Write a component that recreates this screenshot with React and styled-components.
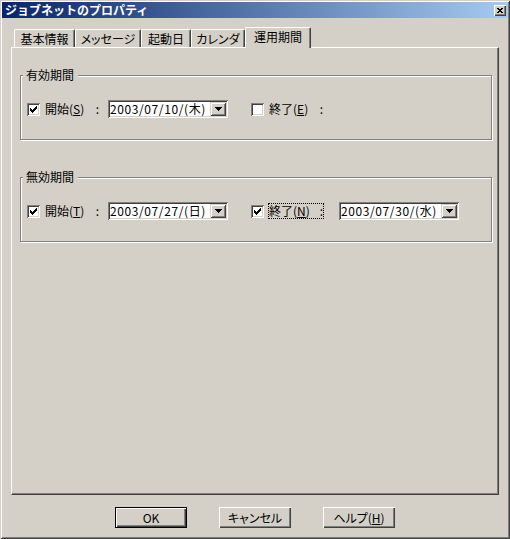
import React from "react";
import styled, { createGlobalStyle } from "styled-components";

const TABS = [
  { label: "基本情報", width: 61 },
  { label: "メッセージ", width: 66 },
  { label: "起動日", width: 50 },
  { label: "カレンダ", width: 54 },
  { label: "運用期間", width: 66, active: true },
];

const GROUPS = [
  {
    title: "有効期間",
    gap: 27,
    start: { checked: true, label: "開始", key: "S", date: "2003/07/10/(木)" },
    end: { checked: false, label: "終了", key: "E" },
  },
  {
    title: "無効期間",
    gap: 37,
    start: { checked: true, label: "開始", key: "T", date: "2003/07/27/(日)" },
    end: { checked: true, label: "終了", key: "N", focused: true, date: "2003/07/30/(水)" },
  },
];

const CHECK_MARK = [
  "......#",
  ".....##",
  "#...###",
  "##.###.",
  "#####..",
  ".###...",
  "..#....",
];

const ARROW_DOWN = ["#######", ".#####.", "..###..", "...#..."];

const CLOSE_X = ["##..##", ".####.", "..##..", ".####.", "##..##"];

function PixelIcon({ rows, color = "#000" }) {
  const d = rows
    .flatMap((row, y) =>
      [...row].map((c, x) => (c === "#" ? `M${x} ${y}h1v1h-1z` : ""))
    )
    .join("");
  const w = rows[0].length;
  const h = rows.length;
  return (
    <svg width={w} height={h} viewBox={`0 0 ${w} ${h}`} shapeRendering="crispEdges">
      <path d={d} fill={color} />
    </svg>
  );
}

function Checkbox({ checked, offset = 0 }) {
  return <Check $offset={offset}>{checked && <PixelIcon rows={CHECK_MARK} />}</Check>;
}

function DatePicker({ value, offset }) {
  return (
    <Combo $offset={offset}>
      <ComboText>{value}</ComboText>
      <DropButton>
        <PixelIcon rows={ARROW_DOWN} />
      </DropButton>
    </Combo>
  );
}

function Field({ item, checkOffset, comboOffset }) {
  return (
    <>
      <Checkbox checked={item.checked} offset={checkOffset} />
      <Label $focused={item.focused}>
        <span>
          {item.label}(<u>{item.key}</u>)
        </span>
        <span>:</span>
      </Label>
      {item.date && <DatePicker value={item.date} offset={comboOffset} />}
    </>
  );
}

export default function App() {
  return (
    <>
      <GlobalStyle />
      <Window>
        <TitleBar>
          <Title>ジョブネットのプロパティ</Title>
          <CloseButton>
            <PixelIcon rows={CLOSE_X} />
          </CloseButton>
        </TitleBar>
        <Body>
          <TabStrip>
            {TABS.map((tab) => (
              <Tab key={tab.label} $width={tab.width} $active={tab.active}>
                {tab.label}
              </Tab>
            ))}
          </TabStrip>
          <Panel>
            {GROUPS.map((group) => (
              <Group key={group.title} $gap={group.gap}>
                <Legend>{group.title}</Legend>
                <Row>
                  <Field item={group.start} checkOffset={0} comboOffset={8} />
                  <Field item={group.end} checkOffset={23} comboOffset={15} />
                </Row>
              </Group>
            ))}
          </Panel>
          <Footer>
            <Button $default>OK</Button>
            <Button>キャンセル</Button>
            <Button>
              ヘルプ(<u>H</u>)
            </Button>
          </Footer>
        </Body>
      </Window>
    </>
  );
}

// Styled Components
const GlobalStyle = createGlobalStyle`
  html, body {
    margin: 0;
    padding: 0;
    background: #d4d0c8;
  }
  body {
    font-family: "Noto Sans CJK JP", "Noto Sans", sans-serif;
    font-size: 12px;
    color: #000;
  }
  u {
    text-underline-offset: 1px;
  }
`;

const raised = `
  box-shadow: inset 1px 1px 0 #d4d0c8, inset -1px -1px 0 #404040,
    inset 2px 2px 0 #fff, inset -2px -2px 0 #808080;
`;

const sunken = `
  box-shadow: inset 1px 1px 0 #808080, inset -1px -1px 0 #fff,
    inset 2px 2px 0 #404040, inset -2px -2px 0 #d4d0c8;
`;

const bevel = `
  box-shadow: inset 1px 1px 0 #fff, inset -1px -1px 0 #404040,
    inset -2px -2px 0 #808080;
`;

const Window = styled.div`
  box-sizing: border-box;
  width: 510px;
  height: 539px;
  padding: 2px;
  display: flex;
  flex-direction: column;
  background: #d4d0c8;
  ${raised}
`;

const TitleBar = styled.div`
  height: 16px;
  flex: none;
  display: flex;
  align-items: center;
  justify-content: space-between;
  padding: 0 2px 0 3px;
  background: linear-gradient(to right, #0a246a, #a6caf0);
`;

const Title = styled.span`
  color: #fff;
  font-weight: bold;
  line-height: 16px;
  white-space: nowrap;
`;

const CloseButton = styled.span`
  box-sizing: border-box;
  width: 12px;
  height: 11px;
  display: flex;
  align-items: center;
  justify-content: center;
  background: #d4d0c8;
  ${bevel}
`;

const Body = styled.div`
  flex: 1;
  display: flex;
  flex-direction: column;
  padding: 9px 9px 0;
`;

const TabStrip = styled.div`
  height: 20px;
  flex: none;
  display: flex;
  align-items: flex-end;
  padding-left: 3px;
`;

const Tab = styled.div`
  box-sizing: border-box;
  width: ${(p) => p.$width}px;
  height: ${(p) => (p.$active ? 21 : 18)}px;
  margin-bottom: ${(p) => (p.$active ? -1 : 0)}px;
  padding-bottom: ${(p) => (p.$active ? 2 : 0)}px;
  position: relative;
  z-index: ${(p) => (p.$active ? 1 : 0)};
  display: flex;
  align-items: center;
  justify-content: center;
  background: #d4d0c8;
  border-top: 1px solid #fff;
  border-left: 1px solid #fff;
  border-right: 1px solid #404040;
  border-radius: 2px 2px 0 0;
  box-shadow: inset -1px 0 0 #808080;
  line-height: 14px;
  white-space: nowrap;
  font-feature-settings: "palt";
`;

const Panel = styled.div`
  flex: 1;
  box-sizing: border-box;
  display: flex;
  flex-direction: column;
  padding: 0 6px 0 8px;
  border-top: 1px solid #fff;
  border-left: 1px solid #fff;
  border-right: 1px solid #404040;
  border-bottom: 1px solid #404040;
  box-shadow: inset -1px -1px 0 #808080;
`;

const Group = styled.section`
  box-sizing: border-box;
  margin-top: ${(p) => p.$gap}px;
  padding: 0 6px 21px;
  border: 1px solid #808080;
  box-shadow: 1px 1px 0 #fff, inset 1px 1px 0 #fff;
`;

const Legend = styled.div`
  width: fit-content;
  margin: -8px 0 0 -4px;
  padding: 0 4px 0 3px;
  line-height: 14px;
  background: #d4d0c8;
`;

const Row = styled.div`
  height: 18px;
  margin-top: 18px;
  display: flex;
  align-items: center;
`;

const Check = styled.span`
  box-sizing: border-box;
  width: 13px;
  height: 13px;
  flex: none;
  margin-left: ${(p) => p.$offset}px;
  display: flex;
  align-items: center;
  justify-content: center;
  background: #fff;
  ${sunken}
`;

const Label = styled.label`
  box-sizing: border-box;
  width: 56px;
  height: 16px;
  flex: none;
  margin-left: 4px;
  display: flex;
  align-items: center;
  justify-content: space-between;
  border: 1px dotted ${(p) => (p.$focused ? "#000" : "transparent")};
  line-height: 14px;
  white-space: nowrap;
`;

const Combo = styled.div`
  box-sizing: border-box;
  width: 120px;
  height: 18px;
  flex: none;
  margin-left: ${(p) => p.$offset}px;
  padding: 2px;
  display: flex;
  align-items: center;
  background: #fff;
  ${sunken}
`;

const ComboText = styled.span`
  flex: 1;
  line-height: 14px;
  letter-spacing: 0.6px;
  white-space: nowrap;
`;

const DropButton = styled.span`
  box-sizing: border-box;
  width: 16px;
  height: 14px;
  flex: none;
  display: flex;
  align-items: center;
  justify-content: center;
  background: #d4d0c8;
  ${raised}
`;

const Footer = styled.div`
  flex: none;
  display: flex;
  justify-content: center;
  gap: 32px;
  padding: 12px 0 9px;
`;

const Button = styled.button`
  box-sizing: border-box;
  width: 72px;
  height: 21px;
  margin: 0;
  padding: 0;
  font: inherit;
  color: #000;
  line-height: 14px;
  background: #d4d0c8;
  border: ${(p) => (p.$default ? "1px solid #000" : "none")};
  ${bevel}
  font-feature-settings: "palt";
`;
